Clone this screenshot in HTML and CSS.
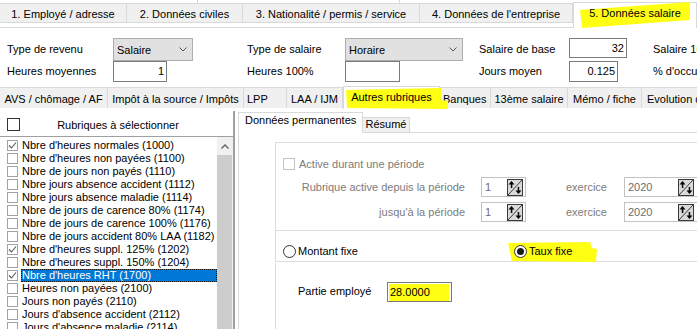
FILE: index.html
```html
<!DOCTYPE html>
<html lang="fr">
<head>
<meta charset="utf-8">
<title>Données salaire</title>
<link rel="stylesheet" href="styles.css">
</head>
<body>
<div class="app">
  <div class="strip"><span class="seg sg1"></span><span class="seg sg2"></span><span class="seg sg3"></span></div>

  <div class="tabs1">
    <div class="tab w1">1. Employé / adresse</div>
    <div class="tab w2">2. Données civiles</div>
    <div class="tab w3">3. Nationalité / permis / service</div>
    <div class="tab w4">4. Données de l'entreprise</div>
    <div class="tab w5 active"><span class="lbl">5. Données salaire</span></div>
  </div>

  <div class="form">
    <span class="flabel">Type de revenu</span>
    <div class="select sel1"><span>Salaire</span><svg class="chev" width="8" height="5" viewBox="0 0 8 5"><polyline points="0.5,0.5 4,4 7.5,0.5" fill="none" stroke="#555" stroke-width="1"/></svg></div>
    <span class="flabel">Type de salaire</span>
    <div class="select sel2"><span>Horaire</span><svg class="chev" width="8" height="5" viewBox="0 0 8 5"><polyline points="0.5,0.5 4,4 7.5,0.5" fill="none" stroke="#555" stroke-width="1"/></svg></div>
    <span class="flabel">Salaire de base</span>
    <div class="num n32">32</div>
    <span class="flabel">Salaire 100%</span>

    <span class="flabel">Heures moyennes</span>
    <div class="num n1">1</div>
    <span class="flabel">Heures 100%</span>
    <div class="num nh"></div>
    <span class="flabel">Jours moyen</span>
    <div class="num nj">0.125</div>
    <span class="flabel">% d'occupation</span>
  </div>

  <div class="tabs2">
    <div class="tab2 v1">AVS / chômage / AF</div>
    <div class="tab2 v2">Impôt à la source / Impôts</div>
    <div class="tab2 v3">LPP</div>
    <div class="tab2 v4">LAA / IJM</div>
    <div class="tab2 v5 active"><span class="lbl">Autres rubriques</span></div>
    <div class="tab2 v6">Banques</div>
    <div class="tab2 v7">13ème salaire</div>
    <div class="tab2 v8">Mémo / fiche</div>
    <div class="tab2 v9">Evolution des salaires</div>
  </div>

  <div class="main">
    <div class="left">
      <div class="lhead">
        <span class="hcb"></span>
        <span class="htxt">Rubriques à sélectionner</span>
      </div>
      <div class="list">
        <div class="items">
          <div class="item on"><span class="cb"><svg width="9" height="9" viewBox="0 0 9 9"><polyline points="1,4.5 3.5,7 8,1.5" fill="none" stroke="#555" stroke-width="1.1"/></svg></span><span class="txt">Nbre d'heures normales (1000)</span></div>
          <div class="item"><span class="cb"></span><span class="txt">Nbre d'heures non payées (1100)</span></div>
          <div class="item"><span class="cb"></span><span class="txt">Nbre de jours non payés (1110)</span></div>
          <div class="item"><span class="cb"></span><span class="txt">Nbre jours absence accident (1112)</span></div>
          <div class="item"><span class="cb"></span><span class="txt">Nbre jours absence maladie (1114)</span></div>
          <div class="item"><span class="cb"></span><span class="txt">Nbre de jours de carence 80% (1174)</span></div>
          <div class="item"><span class="cb"></span><span class="txt">Nbre de jours de carence 100% (1176)</span></div>
          <div class="item"><span class="cb"></span><span class="txt">Nbre de jours accident 80% LAA (1182)</span></div>
          <div class="item on"><span class="cb"><svg width="9" height="9" viewBox="0 0 9 9"><polyline points="1,4.5 3.5,7 8,1.5" fill="none" stroke="#555" stroke-width="1.1"/></svg></span><span class="txt">Nbre d'heures suppl. 125% (1202)</span></div>
          <div class="item"><span class="cb"></span><span class="txt">Nbre d'heures suppl. 150% (1204)</span></div>
          <div class="item on sel"><span class="cb"><svg width="9" height="9" viewBox="0 0 9 9"><polyline points="1,4.5 3.5,7 8,1.5" fill="none" stroke="#555" stroke-width="1.1"/></svg></span><span class="txt">Nbre d'heures RHT (1700)</span></div>
          <div class="item"><span class="cb"></span><span class="txt">Heures non payées (2100)</span></div>
          <div class="item"><span class="cb"></span><span class="txt">Jours non payés (2110)</span></div>
          <div class="item"><span class="cb"></span><span class="txt">Jours d'absence accident (2112)</span></div>
          <div class="item"><span class="cb"></span><span class="txt">Jours d'absence maladie (2114)</span></div>
        </div>
        <div class="sb">
          <div class="sb-up"><svg width="8" height="5" viewBox="0 0 8 5"><polyline points="0.5,4.5 4,1 7.5,4.5" fill="none" stroke="#606060" stroke-width="1.3"/></svg></div>
          <div class="sb-thumb"></div>
        </div>
      </div>
    </div>

    <div class="right">
      <div class="itabs">
        <div class="itab active">Données permanentes</div>
        <div class="itab">Résumé</div>
      </div>
      <div class="page">
        <div class="group g1">
          <div class="chkrow"><span class="dcb"></span><span class="dis">Active durant une période</span></div>
          <div class="pgrid">
            <span class="plabel dis">Rubrique active depuis la période</span>
            <div class="spinbox sb45"><span>1</span><svg class="spin" width="16" height="17" viewBox="0 0 16 17"><rect x="0.5" y="0.5" width="15" height="16" fill="#dadada" stroke="#3a3a3a"/><line x1="1" y1="16" x2="15" y2="1" stroke="#3a3a3a"/><path d="M4.5 2 L7.5 5.5 L1.5 5.5 Z" fill="#000"/><rect x="3.8" y="5" width="1.5" height="4" fill="#000"/><rect x="10.7" y="8" width="1.5" height="4" fill="#000"/><path d="M11.45 15 L8.45 11.5 L14.45 11.5 Z" fill="#000"/></svg></div>
            <span class="dis">exercice</span>
            <div class="spinbox sb74"><span>2020</span><svg class="spin" width="16" height="17" viewBox="0 0 16 17"><rect x="0.5" y="0.5" width="15" height="16" fill="#dadada" stroke="#3a3a3a"/><line x1="1" y1="16" x2="15" y2="1" stroke="#3a3a3a"/><path d="M4.5 2 L7.5 5.5 L1.5 5.5 Z" fill="#000"/><rect x="3.8" y="5" width="1.5" height="4" fill="#000"/><rect x="10.7" y="8" width="1.5" height="4" fill="#000"/><path d="M11.45 15 L8.45 11.5 L14.45 11.5 Z" fill="#000"/></svg></div>

            <span class="plabel dis">jusqu'à la période</span>
            <div class="spinbox sb45"><span>1</span><svg class="spin" width="16" height="17" viewBox="0 0 16 17"><rect x="0.5" y="0.5" width="15" height="16" fill="#dadada" stroke="#3a3a3a"/><line x1="1" y1="16" x2="15" y2="1" stroke="#3a3a3a"/><path d="M4.5 2 L7.5 5.5 L1.5 5.5 Z" fill="#000"/><rect x="3.8" y="5" width="1.5" height="4" fill="#000"/><rect x="10.7" y="8" width="1.5" height="4" fill="#000"/><path d="M11.45 15 L8.45 11.5 L14.45 11.5 Z" fill="#000"/></svg></div>
            <span class="dis">exercice</span>
            <div class="spinbox sb74"><span>2020</span><svg class="spin" width="16" height="17" viewBox="0 0 16 17"><rect x="0.5" y="0.5" width="15" height="16" fill="#dadada" stroke="#3a3a3a"/><line x1="1" y1="16" x2="15" y2="1" stroke="#3a3a3a"/><path d="M4.5 2 L7.5 5.5 L1.5 5.5 Z" fill="#000"/><rect x="3.8" y="5" width="1.5" height="4" fill="#000"/><rect x="10.7" y="8" width="1.5" height="4" fill="#000"/><path d="M11.45 15 L8.45 11.5 L14.45 11.5 Z" fill="#000"/></svg></div>
          </div>
        </div>

        <div class="group g2">
          <label class="radio r1"><span class="rc"></span><span>Montant fixe</span></label>
          <label class="radio r2"><span class="rc checked"></span><span>Taux fixe</span></label>
        </div>

        <div class="group g3">
          <span class="elabel">Partie employé</span>
          <div class="einput"><span class="ehl">28.0000</span></div>
        </div>
      </div>
    </div>
  </div>
</div>
</body>
</html>
```
FILE: styles.css
```css
* { box-sizing: border-box; margin: 0; padding: 0; }
html, body { width: 697px; height: 329px; overflow: hidden; background: #fff; }
body { font-family: "Liberation Sans", Arial, sans-serif; font-size: 11px; color: #000; }

.app { width: 697px; height: 329px; overflow: hidden; display: flex; flex-direction: column; }

/* top strip (previous tab row remnants) */
.strip { height: 4px; flex: none; display: flex; border-bottom: 1px solid #d9d9d9; }
.seg { height: 3px; border-right: 1px solid #d9d9d9; }
.sg1 { width: 198px; }
.sg2 { width: 202px; }
.sg3 { flex: 1; border-right: none; }

/* main tab row */
.tabs1 { display: flex; height: 24px; flex: none; align-items: flex-start; border-bottom: 1px solid #d9d9d9; }
.tab { height: 19px; padding-top: 2px; line-height: 17px; text-align: center; white-space: nowrap; background: #f0f0f0; border-right: 1px solid #d9d9d9; border-bottom: 1px solid #d9d9d9; flex: none; }
.w1 { width: 127px; }
.w2 { width: 116px; }
.w3 { width: 177px; }
.w4 { width: 153px; }
.w5 { width: 124px; }
.tab.active { position: relative; margin-top: -2px; height: 26px; padding-top: 2px; background: #fff; border: 1px solid #d9d9d9; border-bottom: none; }
.tab.active .lbl, .tab2.active .lbl { position: relative; }
.tab.active::before { content: ""; position: absolute; left: 6px; top: -1px; width: 110px; height: 27px; background: #ffff14; clip-path: polygon(0 8px, 100% 0, 100% 18px, 2px 26px); }

/* form */
.form { height: 58px; flex: none; padding: 10px 0 0 7px; display: grid; grid-template-columns: 106px 134px 98px 134px 90px 84px 1fr; grid-template-rows: 23px 21px; align-items: start; white-space: nowrap; overflow: hidden; }
.flabel { line-height: 13px; align-self: center; }
.select { height: 23px; background: #e1e1e1; border: 1px solid #adadad; display: flex; align-items: center; padding-left: 3px; }
.select span { flex: 1; }
.select .chev { margin-right: 5px; }
.sel1 { width: 80px; }
.sel2 { width: 118px; }
.num { height: 20px; border: 1px solid #7a7a7a; background: #fff; text-align: right; padding-right: 2px; line-height: 18px; }
.n32 { width: 58px; }
.n1 { width: 54px; height: 21px; line-height: 19px; }
.nh { width: 55px; height: 21px; }
.nj { width: 49px; height: 21px; line-height: 19px; }

/* second tab row */
.tabs2 { display: flex; height: 22px; flex: none; padding-top: 1px; border-bottom: 1px solid #d9d9d9; align-items: flex-start; }
.tab2 { height: 21px; padding-top: 3px; line-height: 17px; white-space: nowrap; text-align: center; background: #f0f0f0; border-top: 1px solid #d9d9d9; border-right: 1px solid #d9d9d9; flex: none; }
.v1 { width: 108px; }
.v2 { width: 136px; }
.v3 { width: 43px; text-align: left; padding-left: 3px; }
.v4 { width: 56px; }
.v5 { width: 97px; }
.v6 { width: 51px; text-align: left; padding-left: 3px; }
.v7 { width: 77px; }
.v8 { width: 74px; }
.v9 { width: 80px; text-align: left; padding-left: 5px; }
.tab2.active { position: relative; margin-top: -1px; height: 23px; padding-top: 2px; background: #fff; border-left: 1px solid #d9d9d9; }
.tab2.active::before { content: ""; position: absolute; left: 2px; top: 1px; width: 102px; height: 21px; background: #ffff14; clip-path: polygon(0 2px, 95px 0, 95px 12px, 102px 13px, 102px 21px, 1px 20px); }

/* main area */
.main { flex: 1; display: flex; overflow: hidden; }

.left { width: 235px; flex: none; margin-top: 3px; border-right: 2px solid #a0a0a0; display: flex; flex-direction: column; overflow: hidden; }
.lhead { height: 25px; flex: none; display: flex; align-items: flex-start; }
.hcb { width: 13px; height: 13px; border: 1px solid #333; margin: 7px 0 0 7px; flex: none; background: #fff; }
.htxt { flex: 1; text-align: center; line-height: 13px; margin-top: 8px; padding-right: 17px; }

.list { flex: 1; display: flex; border-top: 1px solid #a0a0a0; overflow: hidden; }
.items { flex: 1; padding-top: 2px; }
.item { height: 13px; display: flex; align-items: center; white-space: nowrap; }
.cb { width: 11px; height: 11px; border: 1px solid #a2a2a2; margin-left: 7px; flex: none; display: flex; align-items: center; justify-content: center; background: #fff; }
.txt { margin-left: 4px; line-height: 13px; }
.item.sel .txt { flex: 1; margin-left: 3px; padding-left: 1px; background: #0078d7; color: #fff; outline: 1px dotted #1a1a1a; outline-offset: -1px; }

.sb { width: 16px; flex: none; background: #f0f0f0; display: flex; flex-direction: column; }
.sb-up { height: 18px; flex: none; display: flex; align-items: center; justify-content: center; }
.sb-thumb { flex: 1; background: #cdcdcd; margin: 0 1px 0 0; }

/* right panel */
.right { flex: 1; margin-left: 3px; padding-top: 4px; display: flex; flex-direction: column; min-width: 0; }
.itabs { height: 21px; flex: none; display: flex; align-items: flex-start; border-bottom: 1px solid #d9d9d9; }
.itab { width: 47px; height: 15px; margin-top: 5px; line-height: 12px; text-align: center; background: #f0f0f0; border-top: 1px solid #d9d9d9; border-right: 1px solid #d9d9d9; flex: none; }
.itab.active { position: relative; width: 125px; height: 21px; margin-top: 0; padding: 1px 0 0 6px; line-height: 13px; text-align: left; background: #fff; border: 1px solid #d9d9d9; border-bottom: none; }

.page { flex: 1; border-left: 1px solid #d9d9d9; padding: 9px 0 0 36px; display: flex; flex-direction: column; overflow: hidden; }
.group { border-left: 1px solid #dcdcdc; flex: none; }
.dis { color: #7b7b7b; white-space: nowrap; }

.g1 { height: 89px; border-top: 1px solid #dcdcdc; border-bottom: 1px solid #dcdcdc; padding: 15px 0 0 7px; }
.chkrow { height: 12px; display: flex; align-items: center; }
.dcb { width: 12px; height: 12px; border: 1px solid #c4c4c4; background: #fff; flex: none; }
.chkrow .dis { margin-left: 4px; line-height: 12px; }
.pgrid { margin-top: 7px; display: grid; grid-template-columns: 182px 101px 58px 74px; grid-auto-rows: 20px; row-gap: 5px; align-items: center; }
.plabel { text-align: right; }
.spinbox { height: 20px; border: 1px solid #c2c2c2; display: flex; align-items: center; padding-left: 3px; color: #6d6d6d; background: #fff; }
.spinbox span { flex: 1; }
.sb45 { width: 45px; margin-left: 16px; }
.sb74 { width: 74px; }
.spin { flex: none; margin-right: 2px; }
.sb74 .spin { margin-right: 3px; }

.g2 { height: 31px; border-bottom: 1px solid #dcdcdc; padding: 14px 0 0 7px; display: flex; align-items: flex-start; }
.radio { display: flex; align-items: center; height: 13px; line-height: 13px; white-space: nowrap; }
.r1 { width: 231px; }
.r2 { position: relative; }
.r2 > span { position: relative; }
.r2::before { content: ""; position: absolute; left: -6px; top: -3px; width: 89px; height: 20px; background: #ffff14; clip-path: polygon(0 1px, 82px 0, 84px 6px, 89px 7px, 88px 20px, 4px 19px); }
.rc { width: 13px; height: 13px; border: 1px solid #333; border-radius: 50%; background: #fff; margin-right: 2px; flex: none; display: flex; align-items: center; justify-content: center; }
.rc.checked::after { content: ""; width: 7px; height: 7px; border-radius: 50%; background: #1a1a1a; }

.g3 { flex: 1; margin-top: 1px; padding: 19px 0 0 22px; display: flex; align-items: flex-start; }
.elabel { width: 89px; line-height: 13px; margin-top: 3px; white-space: nowrap; }
.einput { width: 65px; height: 20px; border: 1px solid #7a7a7a; background: #fff; padding: 1px 0 0 1px; }
.ehl { display: block; width: 60px; height: 17px; background: #ffff14; padding-left: 1px; line-height: 16px; }
```
